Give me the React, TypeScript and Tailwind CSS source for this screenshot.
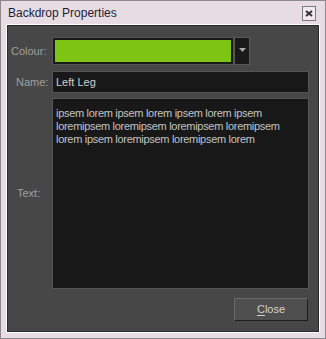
export default function App() {
  const label = "text-[11px] text-[#a0a0a0] leading-none w-[44px]";
  return (
    <div className="w-[326px] h-[339px] bg-[#e7dce2] border border-[#8d8790] flex flex-col font-['Liberation_Sans',sans-serif]">
      {/* title bar */}
      <div className="h-[23px] flex items-center justify-between pl-[7px] pr-[9px]">
        <span className="text-[12px] text-[#1c1c3a] pt-[1px]">Backdrop Properties</span>
        <div className="w-[14px] h-[15px] mt-[2px] border border-[#7c7c7c] bg-[#f0eaee] flex items-center justify-center">
          <svg width="8" height="7" viewBox="0 0 8 7">
            <path d="M1 1 L7 6 M7 1 L1 6" stroke="#333" strokeWidth="2" />
          </svg>
        </div>
      </div>
      {/* client area */}
      <div className="mx-[5px] mb-[5px] flex-1 border border-[#ffffff] flex">
        <div className="flex-1 border border-[#2a2a2a] bg-[#474747] flex flex-col pr-[9px]">
          <div className="flex items-center mt-[11px] h-[28px]">
            <div className={`${label} pl-[3px]`}>Colour:</div>
            <div className="w-[182px] h-[28px] bg-[#1a1a1a] border border-[#545454] p-[2px]">
              <div className="w-full h-full bg-[#7ec413]" />
            </div>
            <div className="w-[16px] h-[28px] bg-[#1a1a1a] border border-[#585858] flex items-center justify-center">
              <svg width="7" height="5" viewBox="0 0 7 5" className="mb-[2px]">
                <path d="M0 0 H7 L3.5 4 Z" fill="#a8a8a8" />
              </svg>
            </div>
          </div>
          <div className="flex items-center mt-[6px] h-[22px]">
            <div className={`${label} pl-[8px]`}>Name:</div>
            <div className="flex-1 h-[22px] bg-[#181818] border border-[#545454] flex items-center pl-[3px] text-[11px] text-[#cfcfcf]">
              Left Leg
            </div>
          </div>
          <div className="flex items-center mt-[5px] h-[191px]">
            <div className={`${label} pl-[9px]`}>Text:</div>
            <div className="flex-1 h-[191px] bg-[#181818] border border-[#545454] px-[3px] pt-[8px] text-[11px] leading-[13px] tracking-[-0.3px] text-[#c4c4c4]">
              ipsem lorem ipsem lorem ipsem lorem ipsem loremipsem loremipsem loremipsem loremipsem lorem ipsem loremipsem loremipsem lorem
            </div>
          </div>
          <div className="flex justify-end mt-[9px]">
            <button className="w-[74px] h-[23px] bg-[#4f4f4f] border border-t-[#6a6a6a] border-l-[#6a6a6a] border-r-[#1e1e1e] border-b-[#1e1e1e] text-[11px] text-[#d2d2d2] mr-[1px]">
              <span className="underline underline-offset-2">C</span>lose
            </button>
          </div>
        </div>
      </div>
    </div>
  );
}
